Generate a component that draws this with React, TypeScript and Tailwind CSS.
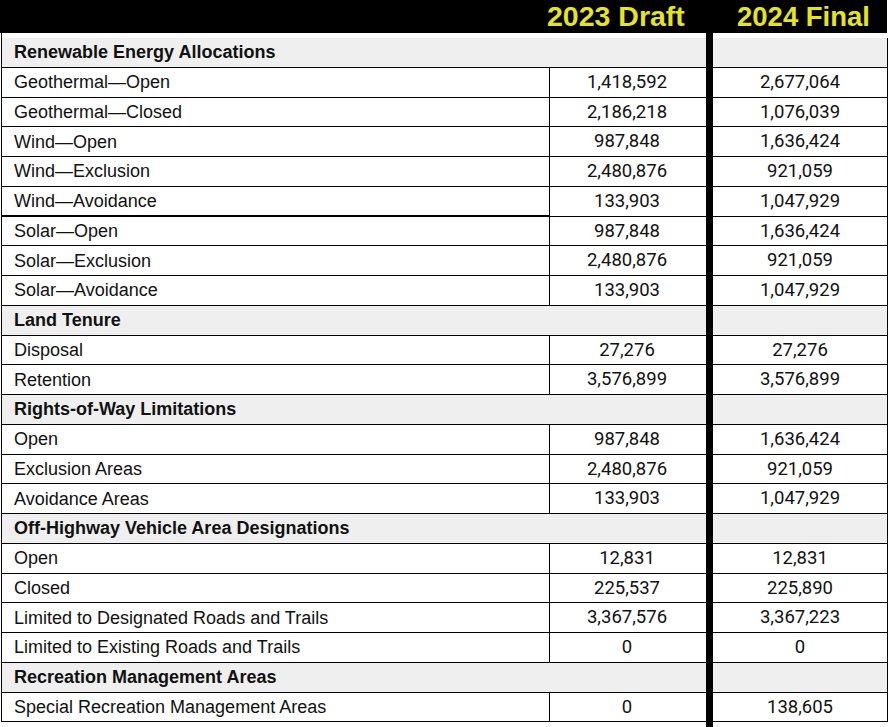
type Row =
  | { kind: "section"; label: string }
  | { kind: "data"; label: string; draft: string; final: string; heavy?: boolean };

const rows: Row[] = [
  { kind: "section", label: "Renewable Energy Allocations" },
  { kind: "data", label: "Geothermal—Open", draft: "1,418,592", final: "2,677,064" },
  { kind: "data", label: "Geothermal—Closed", draft: "2,186,218", final: "1,076,039" },
  { kind: "data", label: "Wind—Open", draft: "987,848", final: "1,636,424" },
  { kind: "data", label: "Wind—Exclusion", draft: "2,480,876", final: "921,059" },
  { kind: "data", label: "Wind—Avoidance", draft: "133,903", final: "1,047,929", heavy: true },
  { kind: "data", label: "Solar—Open", draft: "987,848", final: "1,636,424" },
  { kind: "data", label: "Solar—Exclusion", draft: "2,480,876", final: "921,059" },
  { kind: "data", label: "Solar—Avoidance", draft: "133,903", final: "1,047,929" },
  { kind: "section", label: "Land Tenure" },
  { kind: "data", label: "Disposal", draft: "27,276", final: "27,276" },
  { kind: "data", label: "Retention", draft: "3,576,899", final: "3,576,899" },
  { kind: "section", label: "Rights-of-Way Limitations" },
  { kind: "data", label: "Open", draft: "987,848", final: "1,636,424" },
  { kind: "data", label: "Exclusion Areas", draft: "2,480,876", final: "921,059" },
  { kind: "data", label: "Avoidance Areas", draft: "133,903", final: "1,047,929" },
  { kind: "section", label: "Off-Highway Vehicle Area Designations" },
  { kind: "data", label: "Open", draft: "12,831", final: "12,831" },
  { kind: "data", label: "Closed", draft: "225,537", final: "225,890" },
  { kind: "data", label: "Limited to Designated Roads and Trails", draft: "3,367,576", final: "3,367,223" },
  { kind: "data", label: "Limited to Existing Roads and Trails", draft: "0", final: "0" },
  { kind: "section", label: "Recreation Management Areas" },
  { kind: "data", label: "Special Recreation Management Areas", draft: "0", final: "138,605" },
];

const sans = "font-['Liberation_Sans',Arial,sans-serif]";
const nums = "font-['Roboto','Liberation_Sans',sans-serif]";

export default function App() {
  return (
    <div className="w-[891px] h-[727px] bg-white text-[#111] overflow-hidden">
      {/* Column headings */}
      <div className={`flex h-[33px] w-[887px] items-center bg-black ${sans}`}>
        <div className="w-[547px]" />
        <div className="w-[190px] text-[28.5px] font-bold leading-none text-[#e4e324]">2023 Draft</div>
        <div className="text-[27.5px] font-bold leading-none text-[#e4e324]">2024 Final</div>
      </div>

      <div className="flex">
        {/* Label + draft columns */}
        <div className="ml-[1px] w-[548px]">
          <div className="h-[5px] border-l border-black" />
          {rows.map((r, i) =>
            r.kind === "section" ? (
              <div
                key={i}
                className={`flex h-[29.75px] items-center border-b border-l border-black bg-[#efefef] pl-[12px] pt-[1px] text-[18px] font-bold ${sans}`}
              >
                {r.label}
              </div>
            ) : (
              <div
                key={i}
                className={`flex h-[29.75px] items-center border-l border-black ${r.heavy ? "border-b-2" : "border-b"} pl-[12px] pt-[1px] text-[18px] ${sans}`}
              >
                {r.label}
              </div>
            ),
          )}
        </div>

        <div className="w-[157px]">
          <div className="h-[5px]" />
          {rows.map((r, i) =>
            r.kind === "section" ? (
              <div key={i} className="h-[29.75px] border-b border-black bg-[#efefef]" />
            ) : (
              <div
                key={i}
                className={`flex h-[29.75px] items-center justify-center border-b border-l border-black pr-[2px] pt-[1px] text-[18.5px] ${nums}`}
              >
                {r.draft}
              </div>
            ),
          )}
        </div>

        {/* Heavy divider */}
        <div className="h-[694px] w-[7px] bg-black" />

        <div className="w-[175px]">
          <div className="h-[5px]" />
          {rows.map((r, i) =>
            r.kind === "section" ? (
              <div key={i} className="h-[29.75px] border-b border-r border-black bg-[#efefef]" />
            ) : (
              <div
                key={i}
                className={`flex h-[29.75px] items-center justify-center border-b border-r border-black pt-[1px] text-[18.5px] ${nums}`}
              >
                {r.final}
              </div>
            ),
          )}
        </div>
      </div>
    </div>
  );
}
